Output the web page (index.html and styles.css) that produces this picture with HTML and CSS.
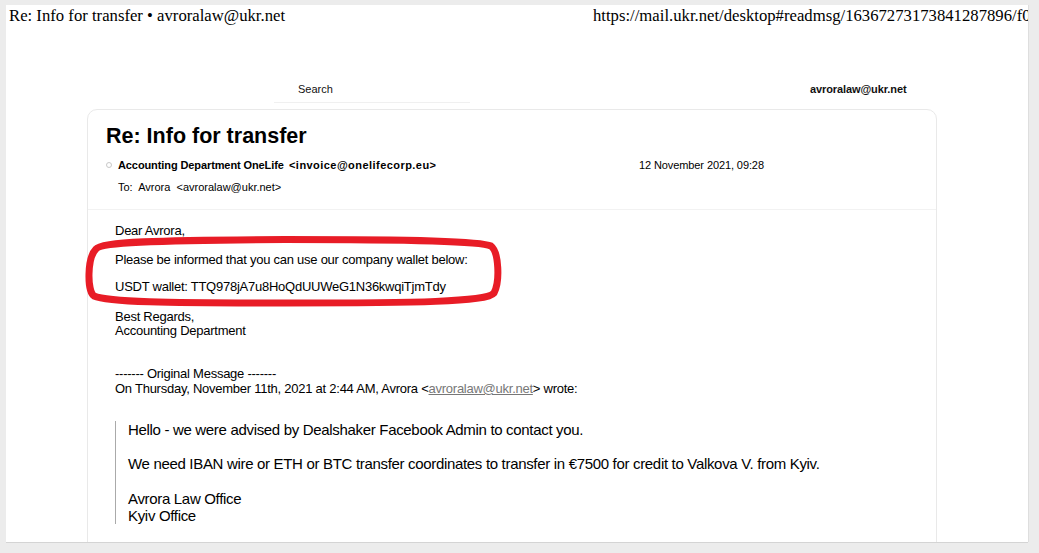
FILE: index.html
```html
<!DOCTYPE html>
<html>
<head>
<meta charset="utf-8">
<link rel="stylesheet" href="styles.css">
</head>
<body>
<div class="sheet">
  <div class="printhead">
    <div class="ph-title">Re: Info for transfer • avroralaw@ukr.net</div>
    <div class="ph-url">https://mail.ukr.net/desktop#readmsg/16367273173841287896/f0</div>
  </div>
  <div class="topnav">
    <div class="search">Search</div>
    <div class="account">avroralaw@ukr.net</div>
  </div>
  <div class="card">
    <h1 class="subject">Re: Info for transfer</h1>
    <div class="from-row">
      <span class="dot"></span>
      <span class="from-name">Accounting Department OneLife</span>
      <span class="from-addr">&lt;invoice@onelifecorp.eu&gt;</span>
      <span class="date">12 November 2021, 09:28</span>
    </div>
    <div class="to-row">To:&nbsp; Avrora &nbsp;&lt;avroralaw@ukr.net&gt;</div>
    <div class="sep"></div>
    <div class="body">
      <p class="p-dear">Dear Avrora,</p>
      <p class="p-line">Please be informed that you can use our company wallet below:</p>
      <p class="p-line2">USDT wallet: TTQ978jA7u8HoQdUUWeG1N36kwqiTjmTdy</p>
      <p class="p-sign">Best Regards,<br>Accounting Department</p>
      <div class="orig">------- Original Message -------<br>On Thursday, November 11th, 2021 at 2:44 AM, Avrora &lt;<a class="lnk">avroralaw@ukr.net</a>&gt; wrote:</div>
      <blockquote class="quote">
        <p class="q1">Hello - we were advised by Dealshaker Facebook Admin to contact you.</p>
        <p class="q2">We need IBAN wire or ETH or BTC transfer coordinates to transfer in €7500 for credit to Valkova V. from Kyiv.</p>
        <p class="q3">Avrora Law Office<br>Kyiv Office</p>
      </blockquote>
    </div>
    <svg class="circle" viewBox="0 0 418 72" width="418" height="72">
      <path d="M11 13 C16 6 70 4 200 3.5 C330 3.5 396 5 406 10 C414 16 415 46 409 57 C402 66 330 67 200 67 C80 67 22 66 9 60 C2 55 2 22 11 13 Z" fill="none" stroke="#e81c26" stroke-width="7"/>
    </svg>
  </div>
</div>
</body>
</html>
```
FILE: styles.css
```css
html, body { margin: 0; padding: 0; }
body {
  background: #ececec;
  width: 1039px;
  height: 553px;
  overflow: hidden;
}
.sheet {
  margin: 5px 0 0 6px;
  width: 1022px;
  height: 537px;
  background: #fff;
  overflow: hidden;
  box-shadow: 0 1px 0 #d4d4d4, 1px 0 0 #dedede;
}
.printhead {
  display: flex;
  height: 22px;
  padding-left: 3px;
  font: 16.7px "Liberation Serif", serif;
  line-height: 22px;
  color: #000;
  white-space: nowrap;
}
.ph-title { width: 584px; flex-shrink: 0; }
.ph-url { overflow: hidden; }
.topnav {
  display: flex;
  margin-top: 54px;
  margin-left: 268px;
  font: 11px "Liberation Sans", Arial, sans-serif;
  color: #111;
  height: 28px;
}
.search {
  width: 172px;
  padding-left: 24px;
  border-bottom: 1px solid #f0f0f0;
  line-height: 16px;
  height: 21px;
}
.account {
  margin-left: 340px;
  font-weight: bold;
  line-height: 16px;
  letter-spacing: -0.1px;
}
.card {
  position: relative;
  margin-left: 81px;
  width: 848px;
  height: 600px;
  border: 1px solid #e9e9e9;
  border-radius: 10px;
  font-family: "Liberation Sans", Arial, sans-serif;
  color: #000;
}
.subject {
  margin: 13px 0 0 18px;
  font-size: 21.5px;
  line-height: 26px;
  font-weight: bold;
}
.from-row {
  display: flex;
  align-items: center;
  margin: 8px 0 0 18px;
  font-size: 11px;
  line-height: 16px;
}
.dot {
  width: 4px;
  height: 4px;
  border: 1px solid #c8c8c8;
  border-radius: 50%;
  margin-right: 6px;
}
.from-name { font-weight: bold; width: 171px; letter-spacing: -0.1px; }
.from-addr { font-weight: bold; width: 350px; letter-spacing: 0.45px; }
.date { letter-spacing: -0.1px; }
.to-row {
  margin: 6px 0 0 30px;
  font-size: 11px;
  line-height: 16px;
}
.sep {
  margin-top: 14px;
  border-top: 1px solid #f2f2f2;
}
.body {
  padding-left: 27px;
  font-size: 13px;
  line-height: 14px;
  letter-spacing: -0.25px;
}
.body p { margin: 0; }
.body .p-dear { margin-top: 14px; }
.body .p-line { margin-top: 15px; }
.body .p-line2 { margin-top: 13px; }
.body .p-sign { margin-top: 16px; }
.orig { margin-top: 28px; line-height: 15px; }
.lnk { color: #777; text-decoration: underline; }
.quote {
  margin: 25px 0 0 0;
  border-left: 1px solid #aaa;
  padding: 0 0 0 12px;
  font-size: 15px;
  line-height: 17px;
  letter-spacing: -0.32px;
}
.quote .q2 { margin-top: 17px; }
.quote .q3 { margin-top: 18px; }
.circle {
  position: absolute;
  left: -3px;
  top: 126px;
}
```
